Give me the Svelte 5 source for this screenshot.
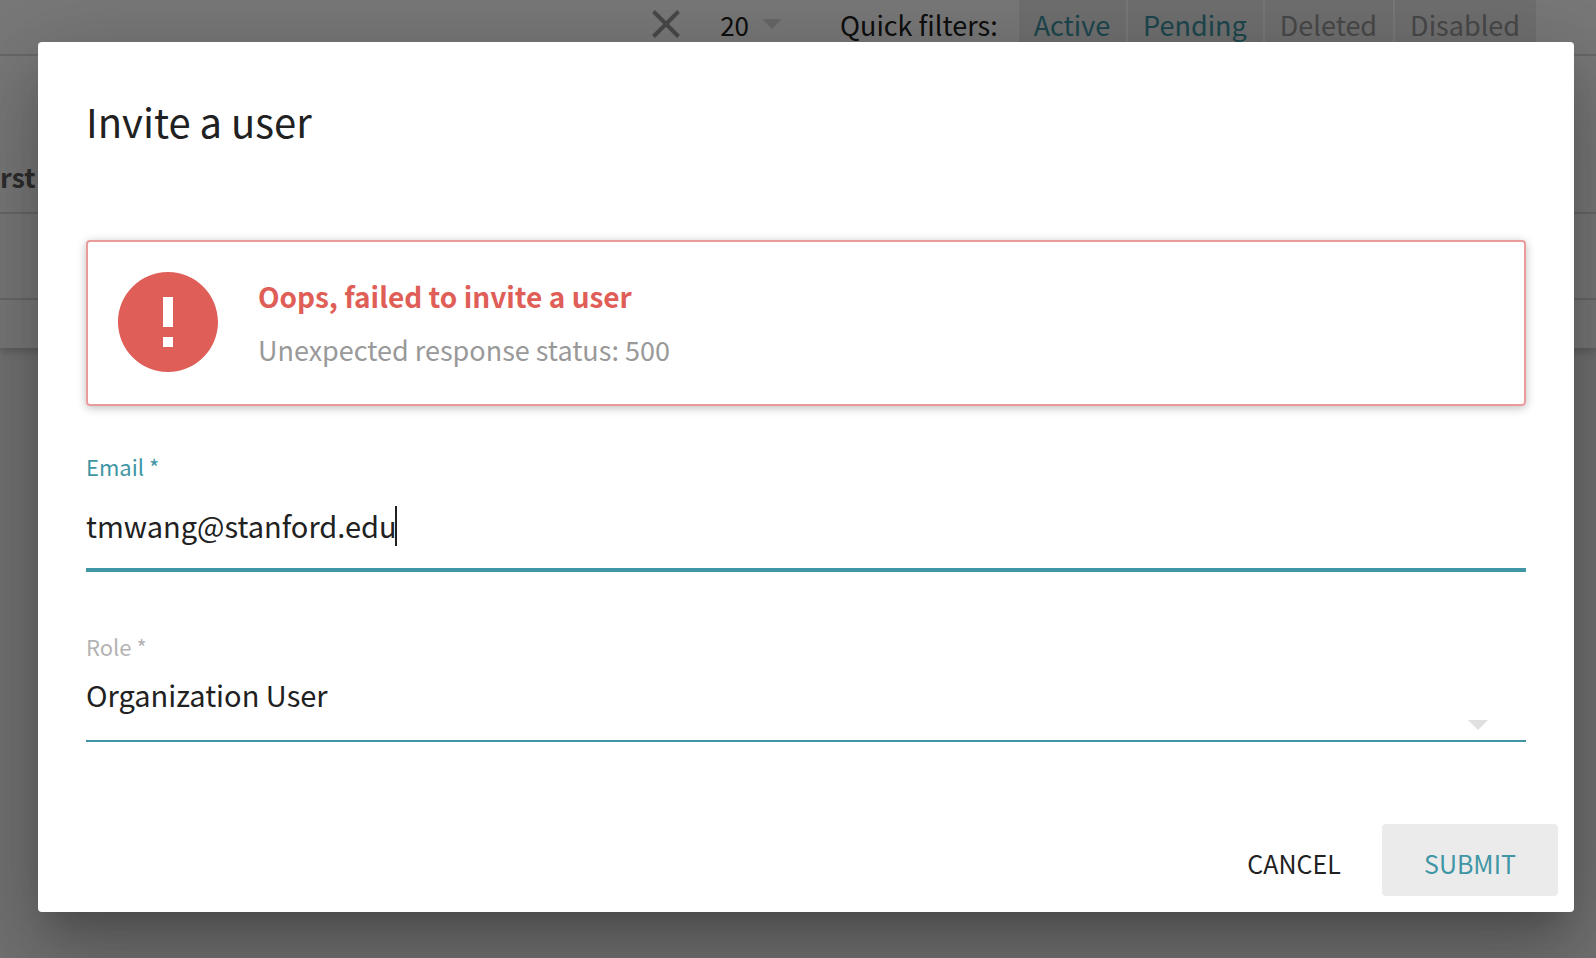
<script>
  const filters = [
    { name: 'Active', on: true },
    { name: 'Pending', on: true },
    { name: 'Deleted', on: false },
    { name: 'Disabled', on: false },
  ];
  const roles = ['Organization User', 'Organization Admin'];

  let email = $state('tmwang@stanford.edu');
  let role = $state('Organization User');
</script>

<div class="page">
  <main class="users">
    <div class="toolbar">
      <button class="clear" aria-label="Clear search">
        <svg width="28" height="28" viewBox="0 0 28 28" aria-hidden="true">
          <path d="M1.5 1.5 26.5 26.5M26.5 1.5 1.5 26.5" stroke="#9a9a9a" stroke-width="4" fill="none" />
        </svg>
      </button>
      <button class="size">
        20
        <svg width="20" height="10" viewBox="0 0 20 10" aria-hidden="true">
          <path d="M0 0h20L10 10z" fill="#dadada" />
        </svg>
      </button>
      <span class="caption">Quick filters:</span>
      <div class="filters">
        {#each filters as filter}
          <button class="filter" class:on={filter.on}>{filter.name}</button>
        {/each}
      </div>
    </div>
    <div class="heading">rst</div>
    <div class="line"></div>
    <div class="foot"></div>
  </main>

  <div class="backdrop">
    <form class="dialog" role="dialog" aria-labelledby="dialog-title" onsubmit={(e) => e.preventDefault()}>
      <div class="body">
        <h2 id="dialog-title">Invite a user</h2>

        <div class="alert" role="alert">
          <svg width="120" height="120" viewBox="0 0 24 24" aria-hidden="true">
            <path
              fill="#df5e57"
              d="M12 2C6.48 2 2 6.48 2 12s4.48 10 10 10 10-4.48 10-10S17.52 2 12 2zm1 15h-2v-2h2v2zm0-4h-2V7h2v6z"
            />
          </svg>
          <div class="message">
            <strong>Oops, failed to invite a user</strong>
            <p>Unexpected response status: 500</p>
          </div>
        </div>

        <div class="field focused">
          <label for="email">Email *</label>
          <div class="control">
            <input id="email" type="text" bind:value={email} />
            <span class="caret"></span>
          </div>
        </div>

        <div class="field">
          <label for="role">Role *</label>
          <div class="control">
            <select id="role" bind:value={role}>
              {#each roles as option}
                <option>{option}</option>
              {/each}
            </select>
            <svg class="arrow" width="20" height="10" viewBox="0 0 20 10" aria-hidden="true">
              <path d="M0 0h20L10 10z" fill="#e0e0e0" />
            </svg>
          </div>
        </div>
      </div>

      <div class="actions">
        <button type="button">CANCEL</button>
        <button type="submit" class="primary">SUBMIT</button>
      </div>
    </form>
  </div>
</div>

<style>
  :global(body) {
    margin: 0;
  }

  .page {
    position: relative;
    min-height: 100vh;
    overflow: hidden;
    background: #f2f2f2;
    color: #212121;
    font-family: 'Noto Sans CJK SC', 'Noto Sans', sans-serif;
    font-size: 28px;
  }

  .page * {
    box-sizing: border-box;
  }

  button,
  input,
  select {
    margin: 0;
    padding: 0;
    border: 0;
    background: none;
    color: inherit;
    font: inherit;
  }

  .users {
    background: #fff;
    box-shadow: 0 2px 10px rgba(0, 0, 0, 0.26);
  }

  .toolbar {
    display: flex;
    justify-content: flex-end;
    align-items: center;
    height: 56px;
    padding-right: 60px;
    border-bottom: 2px solid #dedede;
  }

  .clear {
    display: flex;
    margin-right: 40px;
    padding-bottom: 6px;
  }

  .size {
    display: flex;
    align-items: center;
    gap: 13px;
    height: 48px;
    margin-right: 58px;
    padding-bottom: 6px;
    font-size: 26px;
  }

  .caption {
    height: 52px;
    margin-right: 21px;
    font-size: 27px;
    line-height: 48px;
  }

  .filters {
    display: flex;
    gap: 2px;
    height: 54px;
  }

  .filter {
    padding: 0 16px 4px 15px;
    background: #ebebeb;
    color: #999;
    font-size: 27px;
    line-height: 48px;
  }

  .filter.on {
    color: #4196a5;
  }

  .heading {
    height: 158px;
    padding-top: 91px;
    border-bottom: 2px solid #dedede;
    color: #616161;
    font-weight: 700;
    font-size: 27px;
    line-height: 60px;
  }

  .line {
    height: 86px;
    border-bottom: 2px solid #dedede;
  }

  .foot {
    height: 48px;
  }

  .backdrop {
    position: absolute;
    inset: 0;
    display: flex;
    align-items: flex-start;
    padding: 42px 22px 46px 38px;
    background: rgba(0, 0, 0, 0.53);
  }

  .dialog {
    flex: 1;
    border-radius: 4px;
    background: #fff;
    box-shadow:
      0 22px 30px -14px rgba(0, 0, 0, 0.2),
      0 48px 76px 6px rgba(0, 0, 0, 0.14),
      0 18px 92px 16px rgba(0, 0, 0, 0.12);
  }

  .body {
    padding: 48px 48px 0;
  }

  h2 {
    margin: 0 0 88px;
    font-size: 40px;
    font-weight: 400;
    line-height: 62px;
  }

  .alert {
    display: flex;
    gap: 30px;
    margin-bottom: 44px;
    padding: 20px 20px 22px;
    border: 2px solid #e99b9b;
    border-radius: 4px;
    box-shadow: 0 2px 10px rgba(0, 0, 0, 0.26);
    line-height: 54px;
  }

  .message {
    padding-top: 7px;
  }

  .message strong {
    display: block;
    font-weight: 700;
    color: #df5e57;
  }

  .message p {
    margin: 0;
    color: #999;
    font-size: 27px;
  }

  .field label {
    display: block;
    color: #b3b3b3;
    font-size: 22px;
    line-height: 32px;
  }

  .control {
    position: relative;
    display: flex;
    margin-top: 10px;
    padding-bottom: 24px;
    border-bottom: 2px solid #4196a5;
    font-size: 29px;
  }

  .focused {
    margin-bottom: 58px;
  }

  .focused label {
    color: #4196a5;
  }

  .focused .control {
    margin-top: 24px;
    padding-bottom: 22px;
    border-bottom-width: 4px;
  }

  input {
    field-sizing: content;
    height: 40px;
    padding-bottom: 2px;
    outline: 0;
  }

  .caret {
    width: 2px;
    height: 40px;
    margin-left: -2px;
    background: #212121;
  }

  select {
    flex: 1;
    height: 44px;
    appearance: none;
    outline: 0;
  }

  .arrow {
    position: absolute;
    right: 38px;
    bottom: 10px;
  }

  .actions {
    display: flex;
    justify-content: flex-end;
    padding: 82px 16px 16px;
  }

  .actions button {
    min-width: 176px;
    height: 72px;
    padding-top: 5px;
    border-radius: 4px;
    font-size: 25px;
  }

  .actions .primary {
    background: #ebebeb;
    color: #4196a5;
  }
</style>
